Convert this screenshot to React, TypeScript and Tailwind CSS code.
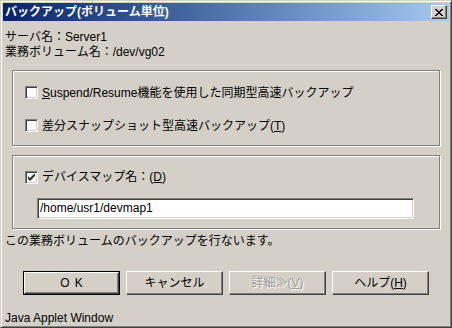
import React from 'react';

const font = { fontFamily: '"Liberation Sans", "Noto Sans CJK JP", sans-serif' };

const Checkbox: React.FC<{ checked?: boolean }> = ({ checked }) => (
  <div className="w-[13px] h-[13px] shrink-0 bg-white border border-t-[#808080] border-l-[#808080] border-r-white border-b-white shadow-[inset_1px_1px_0_#404040,inset_-1px_-1px_0_#d4d0c8] flex items-center justify-center">
    {checked && (
      <svg width="7" height="7" viewBox="0 0 7 7">
        <path d="M0 2 L0 5 L2 7 L7 2 L7 -1 L2 4 Z" fill="#303030" />
      </svg>
    )}
  </div>
);

const Button: React.FC<{ children: React.ReactNode; isDefault?: boolean; disabled?: boolean }> = ({
  children,
  isDefault,
  disabled,
}) => (
  <div
    className={
      isDefault
        ? 'w-[97px] h-[24px] border border-black flex'
        : 'w-[97px] h-[24px] flex'
    }
  >
    <div className="flex-1 flex items-center justify-center bg-[#d4d0c8] border border-t-white border-l-white border-r-[#404040] border-b-[#404040] shadow-[inset_-1px_-1px_0_#808080] text-[12px]">
      <span className={disabled ? 'text-[#9a9a9a]' : 'text-black'}>{children}</span>
    </div>
  </div>
);

export default function App() {
  return (
    <div
      style={font}
      className="w-[452px] h-[328px] bg-[#d4d0c8] border border-t-[#d4d0c8] border-l-[#d4d0c8] border-r-[#404040] border-b-[#404040] shadow-[inset_1px_1px_0_#fff,inset_-1px_-1px_0_#808080] p-[2px] flex flex-col text-black text-[12px] leading-[14px] overflow-hidden"
    >
      {/* Title bar */}
      <div className="h-[18px] shrink-0 flex items-center justify-between bg-linear-to-r from-[#0a246a] to-[#a6caf0]">
        <span className="pl-[2px] text-white font-bold text-[12px]">バックアップ(ボリューム単位)</span>
        <div className="w-[16px] h-[14px] mr-[2px] bg-[#d4d0c8] border border-t-white border-l-white border-r-[#404040] border-b-[#404040] shadow-[inset_-1px_-1px_0_#808080] flex items-center justify-center">
          <svg width="8" height="7" viewBox="0 0 8 7">
            <path d="M0 0h2v1h1v1h2V1h1V0h2v1H7v1H6v1H5v1h1v1h1v1h1v1H6V6H5V5H3v1H2v1H0V6h1V5h1V4h1V3H2V2H1V1H0z" fill="#000" />
          </svg>
        </div>
      </div>

      {/* Info */}
      <div className="pl-[2px] mt-[9px] flex flex-col gap-[1px]">
        <div>サーバ名：Server1</div>
        <div>業務ボリューム名：/dev/vg02</div>
      </div>

      {/* Backup type group */}
      <div className="mx-[9px] mt-[11px] h-[77px] border border-[#808080] shadow-[inset_1px_1px_0_#fff,1px_1px_0_#fff] pl-[12px] pt-[15px] flex flex-col gap-[20px]">
        <div className="flex items-center gap-[4px] h-[13px]">
          <Checkbox />
          <span>
            <span className="underline">S</span>uspend/Resume機能を使用した同期型高速バックアップ
          </span>
        </div>
        <div className="flex items-center gap-[4px] h-[13px]">
          <Checkbox />
          <span>
            差分スナップショット型高速バックアップ(<span className="underline">T</span>)
          </span>
        </div>
      </div>

      {/* Device map group */}
      <div className="mx-[9px] mt-[9px] h-[75px] border border-[#808080] shadow-[inset_1px_1px_0_#fff,1px_1px_0_#fff] pl-[12px] pt-[15px] flex flex-col">
        <div className="flex items-center gap-[4px] h-[13px]">
          <Checkbox checked />
          <span>
            デバイスマップ名：(<span className="underline">D</span>)
          </span>
        </div>
        <div className="mt-[14px] ml-[12px] w-[377px] h-[21px] bg-white border border-t-[#808080] border-l-[#808080] border-r-white border-b-white shadow-[inset_1px_1px_0_#404040,inset_-1px_-1px_0_#d4d0c8] flex items-center pl-[2px]">
          /home/usr1/devmap1
        </div>
      </div>

      {/* Status */}
      <div className="pl-[2px] mt-[5px]">この業務ボリュームのバックアップを行ないます。</div>

      {/* Buttons */}
      <div className="mt-[23px] pl-[20px] flex gap-[6px]">
        <Button isDefault>
          <span className="tracking-[5px] pl-[5px]">OK</span>
        </Button>
        <Button>キャンセル</Button>
        <Button disabled>
          <span className="[text-shadow:1px_1px_0_#fff]">
            詳細≫(<span className="underline">V</span>)
          </span>
        </Button>
        <Button>
          ヘルプ(<span className="underline">H</span>)
        </Button>
      </div>

      {/* Footer */}
      <div className="pl-[2px] mt-[16px]">Java Applet Window</div>
    </div>
  );
}
